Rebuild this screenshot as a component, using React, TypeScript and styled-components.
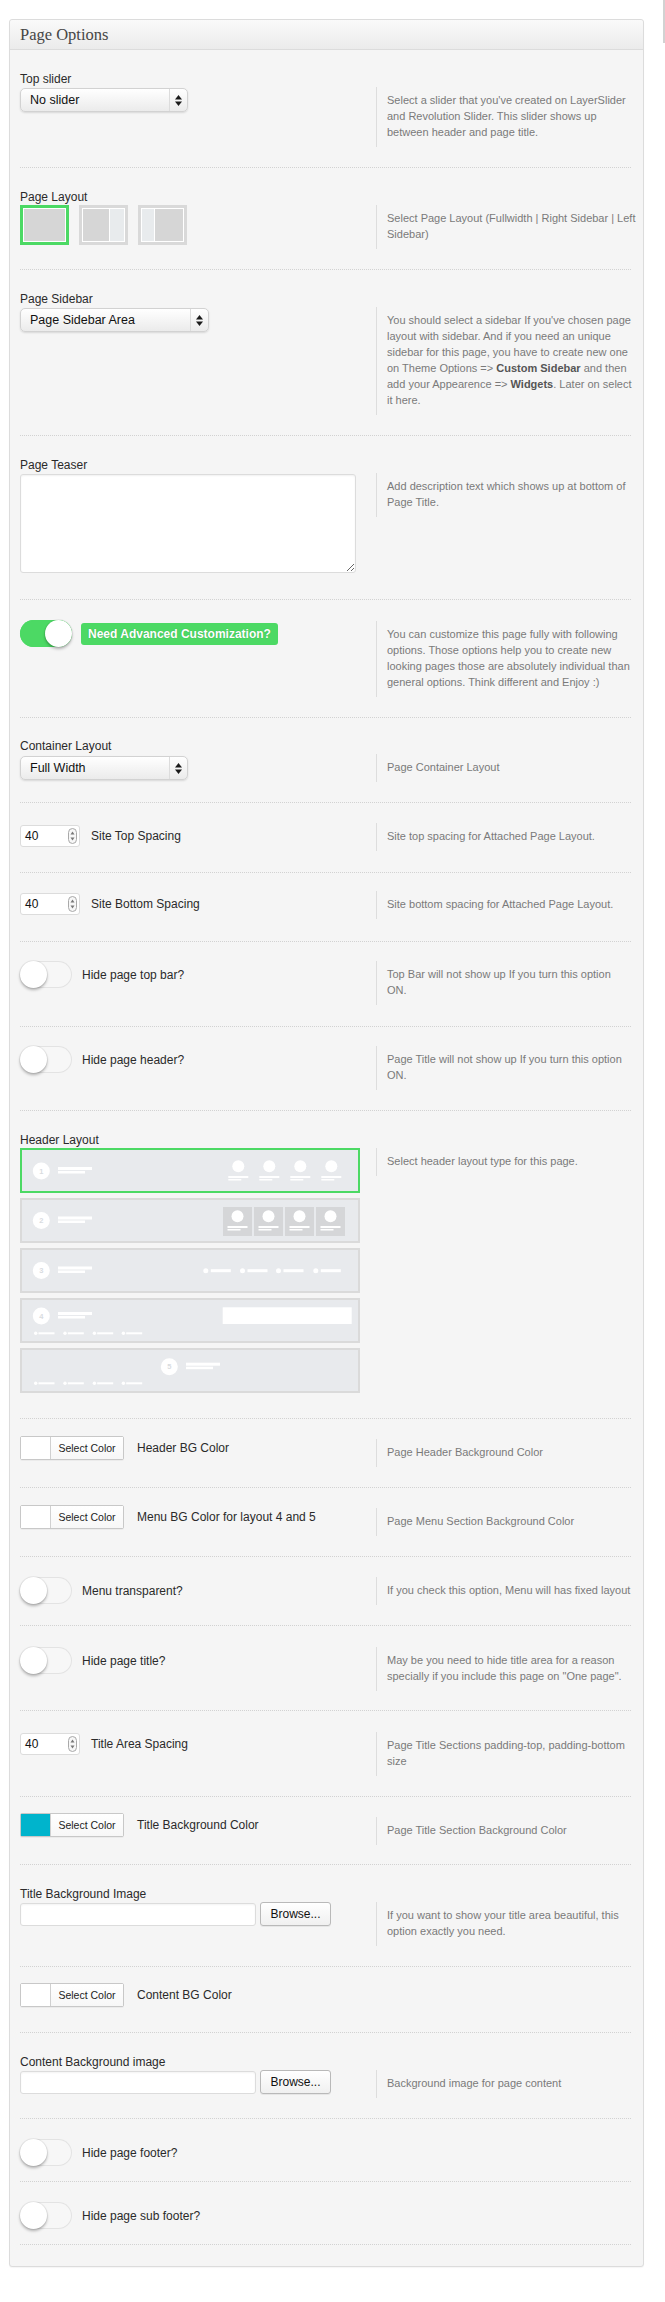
import React from "react";
import styled, { createGlobalStyle } from "styled-components";

const GREEN = "#4cd964";

const GlobalStyle = createGlobalStyle`
  html, body { margin: 0; padding: 0; background: #ffffff; }
  body { font-family: "Liberation Sans", Arial, sans-serif; color: #2a2a2a; }
  * { box-sizing: border-box; }
`;

const Page = styled.div`
  display: flex;
  align-items: flex-start;
  width: 665px;
  min-height: 2302px;
`;

const EdgeLine = styled.div`
  width: 2px;
  height: 43px;
  margin-left: auto;
  background: #d2d2d2;
`;

const Panel = styled.section`
  width: 635px;
  margin: 19px 0 0 9px;
  background: #f5f5f5;
  border: 1px solid #dcdcdc;
  border-radius: 3px;
  box-shadow: 0 1px 1px rgba(0, 0, 0, 0.04);
`;

const PanelHeader = styled.header`
  height: 30px;
  display: flex;
  align-items: center;
  padding: 0 10px;
  background: linear-gradient(#fafafa, #ebebeb);
  border-bottom: 1px solid #dcdcdc;
  border-radius: 3px 3px 0 0;
`;

const Title = styled.h2`
  margin: 0;
  font-family: "Liberation Serif", "Times New Roman", serif;
  font-size: 16.5px;
  font-weight: normal;
  color: #464646;
`;

const PanelBody = styled.div`
  padding: 0 12px 21px 10px;
`;

const Row = styled.div<{ $pt?: number; $pb?: number }>`
  display: grid;
  grid-template-columns: 356px 1fr;
  grid-template-areas:
    "label label"
    "control desc";
  align-items: start;
  padding: ${(p) => p.$pt ?? 21}px 0 ${(p) => p.$pb ?? 20}px;
  border-bottom: 1px dotted #d2d2d2;
`;

const Label = styled.div`
  grid-area: label;
  font-size: 12px;
  line-height: 16px;
  color: #2a2a2a;
`;

const Control = styled.div<{ $mt?: number; $mb?: number; $gap?: number }>`
  grid-area: control;
  display: flex;
  align-items: center;
  gap: ${(p) => p.$gap ?? 10}px;
  margin-top: ${(p) => p.$mt ?? 0}px;
  margin-bottom: ${(p) => p.$mb ?? 0}px;
`;

const Stack = styled.div`
  grid-area: control;
  display: flex;
  flex-direction: column;
  gap: 5px;
  margin-bottom: 5px;
`;

const Desc = styled.div<{ $mt?: number }>`
  grid-area: desc;
  margin-top: ${(p) => p.$mt ?? 0}px;
  padding: 5px 0 7px 10px;
  border-left: 1px solid #dddddd;
  font-size: 11px;
  line-height: 16px;
  color: #7a7a7a;
  white-space: nowrap;
`;

const Strong = styled.b`
  color: #555555;
`;

const InlineLabel = styled.span`
  font-size: 12px;
  color: #2a2a2a;
  white-space: nowrap;
`;

/* ---------- select ---------- */
const SelectBox = styled.div<{ $w: number }>`
  width: ${(p) => p.$w}px;
  height: 24px;
  display: flex;
  align-items: stretch;
  border: 1px solid #d2d2d2;
  border-radius: 5px;
  background: linear-gradient(#ffffff, #ebebeb);
  box-shadow: 0 1px 2px rgba(0, 0, 0, 0.12);
  font-size: 12.5px;
  color: #111;
`;

const SelectText = styled.span`
  flex: 1;
  display: flex;
  align-items: center;
  padding-left: 9px;
`;

const SelectArrow = styled.span`
  width: 18px;
  display: flex;
  align-items: center;
  justify-content: center;
  border-left: 1px solid #dcdcdc;
`;

function Select({ value, width }: { value: string; width: number }) {
  return (
    <SelectBox $w={width}>
      <SelectText>{value}</SelectText>
      <SelectArrow>
        <svg width="7" height="11" viewBox="0 0 7 11">
          <polygon points="0,4.5 3.5,0 7,4.5" fill="#1a1a1a" />
          <polygon points="0,6.5 3.5,11 7,6.5" fill="#1a1a1a" />
        </svg>
      </SelectArrow>
    </SelectBox>
  );
}

/* ---------- page layout thumbs ---------- */
const LayoutThumb = styled.div<{ $active?: boolean }>`
  width: 49px;
  height: 40px;
  border: 3px solid ${(p) => (p.$active ? GREEN : "#d9d9d9")};
  background: #ffffff;
  padding: 1px;
  display: flex;
  gap: 1px;
`;

const Pane = styled.div<{ $w?: number; $light?: boolean }>`
  flex: ${(p) => (p.$w ? `0 0 ${p.$w}px` : "1")};
  background: ${(p) => (p.$light ? "#e8ebed" : "#d6d6d6")};
`;

const ThumbRow = styled.div`
  display: flex;
  gap: 10px;
`;

/* ---------- textarea ---------- */
const TextArea = styled.textarea`
  display: block;
  width: 336px;
  height: 99px;
  border: 1px solid #dcdcdc;
  border-radius: 3px;
  background: #ffffff;
  box-shadow: inset 0 1px 2px rgba(0, 0, 0, 0.06);
  resize: both;
  outline: none;
`;

/* ---------- toggle ---------- */
const Track = styled.span<{ $on?: boolean }>`
  width: 52px;
  height: 27px;
  flex: 0 0 52px;
  display: flex;
  justify-content: ${(p) => (p.$on ? "flex-end" : "flex-start")};
  border-radius: 14px;
  background: ${(p) => (p.$on ? GREEN : "#f7f7f7")};
  box-shadow: inset 0 0 0 1px ${(p) => (p.$on ? GREEN : "#e3e3e3")};
`;

const Knob = styled.span`
  width: 27px;
  height: 27px;
  border-radius: 50%;
  background: #ffffff;
  box-shadow: 0 2px 3px rgba(0, 0, 0, 0.28), 0 0 0 1px rgba(0, 0, 0, 0.05);
`;

function Toggle({ on }: { on?: boolean }) {
  return (
    <Track $on={on}>
      <Knob />
    </Track>
  );
}

const GreenBadge = styled.span`
  height: 22px;
  padding: 0 7px;
  display: flex;
  align-items: center;
  border-radius: 3px;
  background: ${GREEN};
  color: #ffffff;
  font-size: 12px;
  font-weight: bold;
  text-shadow: 0 0 1px rgba(0, 0, 0, 0.25);
  white-space: nowrap;
`;

/* ---------- number ---------- */
const NumberBox = styled.div`
  width: 60px;
  height: 22px;
  display: flex;
  align-items: center;
  justify-content: space-between;
  padding: 0 2px 0 4px;
  border: 1px solid #dcdcdc;
  border-radius: 3px;
  background: #ffffff;
  font-size: 12px;
  color: #111;
`;

function NumberField({ value }: { value: string }) {
  return (
    <NumberBox>
      <span>{value}</span>
      <svg width="9" height="16" viewBox="0 0 9 16">
        <rect x="0.5" y="0.5" width="8" height="15" rx="4" fill="#f7f7f7" stroke="#a9a9a9" />
        <polygon points="2.5,6.5 4.5,3.5 6.5,6.5" fill="#777" />
        <polygon points="2.5,9.5 4.5,12.5 6.5,9.5" fill="#777" />
      </svg>
    </NumberBox>
  );
}

/* ---------- color picker ---------- */
const PickerBox = styled.div`
  width: 104px;
  height: 24px;
  display: flex;
  border: 1px solid #c8c8c8;
  border-radius: 2px;
  background: #ffffff;
  box-shadow: 0 1px 0 rgba(0, 0, 0, 0.04);
`;

const Swatch = styled.span<{ $color: string }>`
  flex: 0 0 30px;
  background: ${(p) => p.$color};
  border-right: 1px solid #d0d0d0;
`;

const PickerText = styled.span`
  flex: 1;
  display: flex;
  align-items: center;
  justify-content: center;
  font-size: 10.5px;
  color: #222;
  background: linear-gradient(#ffffff, #f7f7f7);
`;

function ColorPicker({ color }: { color: string }) {
  return (
    <PickerBox>
      <Swatch $color={color} />
      <PickerText>Select Color</PickerText>
    </PickerBox>
  );
}

/* ---------- upload ---------- */
const TextInput = styled.div`
  width: 236px;
  height: 23px;
  border: 1px solid #dcdcdc;
  border-radius: 3px;
  background: #ffffff;
  box-shadow: inset 0 1px 2px rgba(0, 0, 0, 0.05);
`;

const BrowseButton = styled.button`
  width: 71px;
  height: 24px;
  padding: 0;
  border: 1px solid #b9b9b9;
  border-radius: 3px;
  background: linear-gradient(#ffffff, #f0f0f0);
  box-shadow: 0 1px 0 rgba(0, 0, 0, 0.06);
  font-family: "Liberation Sans", Arial, sans-serif;
  font-size: 12px;
  color: #111;
`;

/* ---------- header layout thumbs ---------- */
const HeaderThumb = styled.div<{ $active?: boolean }>`
  width: 340px;
  height: 45px;
  border: 2px solid ${(p) => (p.$active ? GREEN : "#dadada")};
  background: #e8eaed;
  svg { display: block; }
`;

function NumBadge({ cx, cy, n }: { cx: number; cy: number; n: number }) {
  return (
    <g>
      <circle cx={cx} cy={cy} r={8.5} fill="#ffffff" />
      <text
        x={cx}
        y={cy + 2.6}
        fontSize="7.5"
        fontWeight="700"
        fill="#d9dcdf"
        textAnchor="middle"
        fontFamily="Liberation Sans, Arial, sans-serif"
      >
        {n}
      </text>
    </g>
  );
}

function LogoLines({ x, cy }: { x: number; cy: number }) {
  return (
    <g fill="#ffffff">
      <rect x={x} y={cy - 4} width={34} height={3} />
      <rect x={x} y={cy} width={27} height={2.5} />
    </g>
  );
}

function IconItem({ cx }: { cx: number }) {
  return (
    <g fill="#ffffff">
      <circle cx={cx} cy={16.3} r={6} />
      <rect x={cx - 10} y={26} width={20} height={2} />
      <rect x={cx - 10} y={29} width={13} height={1.5} />
    </g>
  );
}

function MenuItem({ x, cy, big }: { x: number; cy: number; big?: boolean }) {
  return big ? (
    <g fill="#ffffff">
      <circle cx={x + 2.5} cy={cy} r={2.5} />
      <rect x={x + 7.5} y={cy - 1.5} width={20} height={3} />
    </g>
  ) : (
    <g fill="#ffffff">
      <circle cx={x + 1.7} cy={cy} r={1.7} />
      <rect x={x + 4.5} y={cy - 1} width={16} height={2} />
    </g>
  );
}

function BottomMenu() {
  return (
    <g>
      {[12, 41.3, 70.7, 99.7].map((x) => (
        <MenuItem key={x} x={x} cy={33.3} />
      ))}
    </g>
  );
}

function HeaderDrawing({ n }: { n: number }) {
  return (
    <svg width="336" height="41" viewBox="0 0 336 41">
      {n === 1 && (
        <g>
          <NumBadge cx={19.3} cy={21} n={1} />
          <LogoLines x={36} cy={21} />
          {[216.3, 247.3, 278.3, 309.3].map((cx) => (
            <IconItem key={cx} cx={cx} />
          ))}
        </g>
      )}
      {n === 2 && (
        <g>
          <NumBadge cx={19.3} cy={20.5} n={2} />
          <LogoLines x={36} cy={20.5} />
          {[201, 232, 263, 294].map((x) => (
            <g key={x}>
              <rect x={x} y={7} width={29} height={29} fill="#d5d6d8" />
              <IconItem cx={x + 14.5} />
            </g>
          ))}
        </g>
      )}
      {n === 3 && (
        <g>
          <NumBadge cx={19.3} cy={20.5} n={3} />
          <LogoLines x={36} cy={20.5} />
          {[181.3, 218, 254, 291.3].map((x) => (
            <MenuItem key={x} x={x} cy={20.7} big />
          ))}
        </g>
      )}
      {n === 4 && (
        <g>
          <NumBadge cx={19.3} cy={16} n={4} />
          <LogoLines x={36} cy={16} />
          <rect x={200.7} y={7.3} width={129} height={16.7} fill="#ffffff" />
          <BottomMenu />
        </g>
      )}
      {n === 5 && (
        <g>
          <NumBadge cx={147.3} cy={16.7} n={5} />
          <LogoLines x={164} cy={16.7} />
          <BottomMenu />
        </g>
      )}
    </svg>
  );
}

export default function App() {
  return (
    <>
      <GlobalStyle />
      <Page>
        <Panel>
          <PanelHeader>
            <Title>Page Options</Title>
          </PanelHeader>
          <PanelBody>
            <Row>
              <Label>Top slider</Label>
              <Control $mt={1}>
                <Select value="No slider" width={168} />
              </Control>
              <Desc>
                Select a slider that you've created on LayerSlider
                <br />
                and Revolution Slider. This slider shows up
                <br />
                between header and page title.
              </Desc>
            </Row>

            <Row>
              <Label>Page Layout</Label>
              <Control>
                <ThumbRow>
                  <LayoutThumb $active>
                    <Pane />
                  </LayoutThumb>
                  <LayoutThumb>
                    <Pane $w={26} />
                    <Pane $light />
                  </LayoutThumb>
                  <LayoutThumb>
                    <Pane $w={12} $light />
                    <Pane />
                  </LayoutThumb>
                </ThumbRow>
              </Control>
              <Desc>
                Select Page Layout (Fullwidth | Right Sidebar | Left
                <br />
                Sidebar)
              </Desc>
            </Row>

            <Row>
              <Label>Page Sidebar</Label>
              <Control $mt={1}>
                <Select value="Page Sidebar Area" width={189} />
              </Control>
              <Desc>
                You should select a sidebar If you've chosen page
                <br />
                layout with sidebar. And if you need an unique
                <br />
                sidebar for this page, you have to create new one
                <br />
                on Theme Options =&gt; <Strong>Custom Sidebar</Strong> and then
                <br />
                add your Appearence =&gt; <Strong>Widgets</Strong>. Later on select
                <br />
                it here.
              </Desc>
            </Row>

            <Row>
              <Label>Page Teaser</Label>
              <Control $mt={1} $mb={6}>
                <TextArea />
              </Control>
              <Desc>
                Add description text which shows up at bottom of
                <br />
                Page Title.
              </Desc>
            </Row>

            <Row $pt={20}>
              <Control $gap={9}>
                <Toggle on />
                <GreenBadge>Need Advanced Customization?</GreenBadge>
              </Control>
              <Desc $mt={1}>
                You can customize this page fully with following
                <br />
                options. Those options help you to create new
                <br />
                looking pages those are absolutely individual than
                <br />
                general options. Think different and Enjoy :)
              </Desc>
            </Row>

            <Row $pt={20}>
              <Label>Container Layout</Label>
              <Control $mt={2}>
                <Select value="Full Width" width={168} />
              </Control>
              <Desc>Page Container Layout</Desc>
            </Row>

            <Row $pt={20} $pb={21}>
              <Control $mt={2} $gap={11}>
                <NumberField value="40" />
                <InlineLabel>Site Top Spacing</InlineLabel>
              </Control>
              <Desc>Site top spacing for Attached Page Layout.</Desc>
            </Row>

            <Row $pt={18} $pb={22}>
              <Control $mt={2} $gap={11}>
                <NumberField value="40" />
                <InlineLabel>Site Bottom Spacing</InlineLabel>
              </Control>
              <Desc>Site bottom spacing for Attached Page Layout.</Desc>
            </Row>

            <Row $pt={19} $pb={21}>
              <Control>
                <Toggle />
                <InlineLabel>Hide page top bar?</InlineLabel>
              </Control>
              <Desc>
                Top Bar will not show up If you turn this option
                <br />
                ON.
              </Desc>
            </Row>

            <Row $pt={19}>
              <Control>
                <Toggle />
                <InlineLabel>Hide page header?</InlineLabel>
              </Control>
              <Desc>
                Page Title will not show up If you turn this option
                <br />
                ON.
              </Desc>
            </Row>

            <Row>
              <Label>Header Layout</Label>
              <Stack>
                {[1, 2, 3, 4, 5].map((n) => (
                  <HeaderThumb key={n} $active={n === 1}>
                    <HeaderDrawing n={n} />
                  </HeaderThumb>
                ))}
              </Stack>
              <Desc>Select header layout type for this page.</Desc>
            </Row>

            <Row $pt={17}>
              <Control $gap={13}>
                <ColorPicker color="#ffffff" />
                <InlineLabel>Header BG Color</InlineLabel>
              </Control>
              <Desc $mt={3}>Page Header Background Color</Desc>
            </Row>

            <Row $pt={17}>
              <Control $gap={13}>
                <ColorPicker color="#ffffff" />
                <InlineLabel>Menu BG Color for layout 4 and 5</InlineLabel>
              </Control>
              <Desc $mt={3}>Page Menu Section Background Color</Desc>
            </Row>

            <Row $pt={20}>
              <Control>
                <Toggle />
                <InlineLabel>Menu transparent?</InlineLabel>
              </Control>
              <Desc>If you check this option, Menu will has fixed layout</Desc>
            </Row>

            <Row $pb={19}>
              <Control>
                <Toggle />
                <InlineLabel>Hide page title?</InlineLabel>
              </Control>
              <Desc>
                May be you need to hide title area for a reason
                <br />
                specially if you include this page on "One page".
              </Desc>
            </Row>

            <Row>
              <Control $mt={1} $gap={11}>
                <NumberField value="40" />
                <InlineLabel>Title Area Spacing</InlineLabel>
              </Control>
              <Desc>
                Page Title Sections padding-top, padding-bottom
                <br />
                size
              </Desc>
            </Row>

            <Row $pt={16} $pb={19}>
              <Control $gap={13}>
                <ColorPicker color="#00b4cc" />
                <InlineLabel>Title Background Color</InlineLabel>
              </Control>
              <Desc $mt={4}>Page Title Section Background Color</Desc>
            </Row>

            <Row>
              <Label>Title Background Image</Label>
              <Control $gap={4}>
                <TextInput />
                <BrowseButton>Browse...</BrowseButton>
              </Control>
              <Desc>
                If you want to show your title area beautiful, this
                <br />
                option exactly you need.
              </Desc>
            </Row>

            <Row $pt={16} $pb={25}>
              <Control $gap={13}>
                <ColorPicker color="#ffffff" />
                <InlineLabel>Content BG Color</InlineLabel>
              </Control>
            </Row>

            <Row>
              <Label>Content Background image</Label>
              <Control $gap={4}>
                <TextInput />
                <BrowseButton>Browse...</BrowseButton>
              </Control>
              <Desc>Background image for page content</Desc>
            </Row>

            <Row $pt={20} $pb={15}>
              <Control>
                <Toggle />
                <InlineLabel>Hide page footer?</InlineLabel>
              </Control>
            </Row>

            <Row $pt={20} $pb={15}>
              <Control>
                <Toggle />
                <InlineLabel>Hide page sub footer?</InlineLabel>
              </Control>
            </Row>
          </PanelBody>
        </Panel>
        <EdgeLine />
      </Page>
    </>
  );
}
